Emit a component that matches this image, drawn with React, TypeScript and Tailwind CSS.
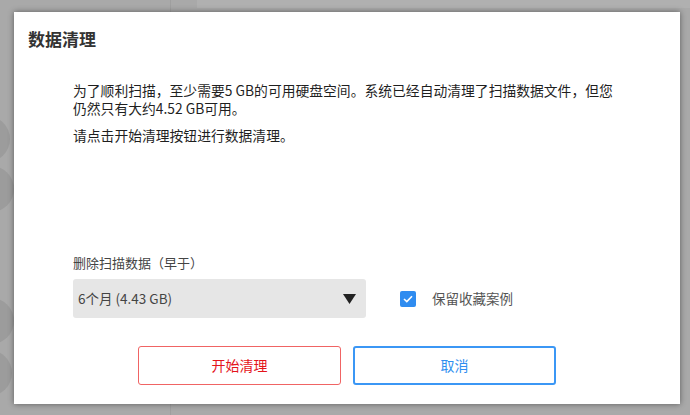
import { useState } from "react";

const font = { fontFamily: '"Noto Sans CJK SC", "Noto Sans", sans-serif' };

export default function App() {
  const [keepFav, setKeepFav] = useState(true);

  return (
    <div className="relative h-[415px] w-[690px] overflow-hidden bg-[#a9a9a9]" style={font}>
      {/* dimmed app behind the dialog */}
      <div className="absolute left-[170px] top-0 h-full w-px bg-[#9f9f9f]" />
      <div className="absolute left-[197px] top-0 h-[8px] w-[493px] bg-[#b0b0b0]" />
      <div className="absolute left-[-36px] top-[116px] h-[46px] w-[46px] rounded-full bg-[#9c9c9c]" />
      <div className="absolute left-[-32px] top-[166px] h-[46px] w-[46px] rounded-full bg-[#9c9c9c]" />
      <div className="absolute left-[-32px] top-[298px] h-[46px] w-[46px] rounded-full bg-[#9c9c9c]" />
      <div className="absolute left-[-34px] top-[350px] h-[46px] w-[46px] rounded-full bg-[#9c9c9c]" />

      <div className="relative ml-[14px] mt-[12px] flex h-[392px] w-[666px] flex-col bg-white shadow-[0_0_6px_rgba(0,0,0,0.45)]">
        <h2 className="px-[14px] pt-[15px] text-[17px] font-bold leading-6 text-[#333]">数据清理</h2>

        <div className="pl-[59px] pt-[30px] text-[13.8px] leading-[18px] text-[#1f1f1f]">
          <p className="whitespace-nowrap">
            为了顺利扫描，至少需要5 GB的可用硬盘空间。系统已经自动清理了扫描数据文件，但您
            <br />
            仍然只有大约4.52 GB可用。
          </p>
          <p className="mt-[9px]">请点击开始清理按钮进行数据清理。</p>
        </div>

        <div className="mt-auto pl-[59px]">
          <p className="text-[13px] leading-[17px] text-[#444]">删除扫描数据（早于）</p>
          <div className="mt-[8px] flex items-center">
            <button
              type="button"
              className="flex h-[39px] w-[293px] items-center justify-between rounded-[3px] bg-[#e6e6e6] pl-[5px] pr-[10px] text-left text-[13.5px] text-[#444]"
            >
              <span>6个月 (4.43 GB)</span>
              <svg width="13" height="10" viewBox="0 0 13 10">
                <path d="M0 0H13L6.5 10Z" fill="#222" />
              </svg>
            </button>
            <label className="ml-[34px] flex cursor-pointer items-center gap-[16px] text-[13.5px] text-[#555]">
              <span
                onClick={() => setKeepFav(!keepFav)}
                className={`flex h-[16px] w-[16px] items-center justify-center rounded-[2px] ${keepFav ? "bg-[#2f8cf0]" : "border border-[#999] bg-white"}`}
              >
                {keepFav && (
                  <svg width="10" height="8" viewBox="0 0 10 8">
                    <path d="M1 4L3.8 6.6L9 1.2" fill="none" stroke="white" strokeWidth="1.6" />
                  </svg>
                )}
              </span>
              保留收藏案例
            </label>
          </div>
        </div>

        <div className="mb-[19px] mt-[28px] flex justify-center gap-[12px]">
          <button
            type="button"
            className="h-[39px] w-[203px] rounded-[3px] border border-[#f06464] text-[14px] text-[#e4141b]"
          >
            开始清理
          </button>
          <button
            type="button"
            className="h-[39px] w-[203px] rounded-[3px] border-2 border-[#3b97f5] text-[14px] text-[#2f8ff0]"
          >
            取消
          </button>
        </div>
      </div>
    </div>
  );
}
